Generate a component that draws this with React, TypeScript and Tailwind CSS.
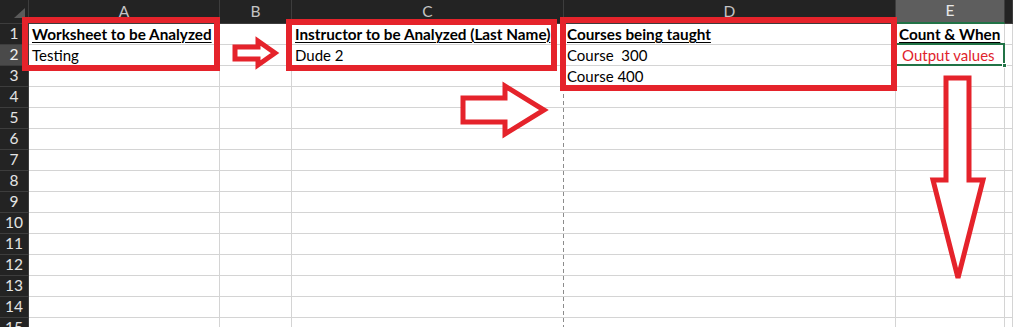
const cols = ['A', 'B', 'C', 'D', 'E', 'F'];

type CellText = { text: string; bold?: boolean; red?: boolean };

const data: Record<string, CellText> = {
  '1A': { text: 'Worksheet to be Analyzed', bold: true },
  '1C': { text: 'Instructor to be Analyzed (Last Name)', bold: true },
  '1D': { text: 'Courses being taught', bold: true },
  '1E': { text: 'Count & When', bold: true },
  '2A': { text: 'Testing' },
  '2C': { text: 'Dude 2' },
  '2D': { text: 'Course  300' },
  '2E': { text: 'Output values', red: true },
  '3D': { text: 'Course 400' },
};

const rows = Array.from({ length: 15 }, (_, i) => i + 1);

function Annotations() {
  const red = '#e5232b';
  return (
    <svg className="pointer-events-none absolute left-0 top-0" width={1013} height={327}>
      <line x1={563.5} y1={24} x2={563.5} y2={327} stroke="#8c8c8c" strokeDasharray="4 3" />
      <rect x={25} y={20} width={192} height={48} fill="none" stroke={red} strokeWidth={6} />
      <rect x={289} y={22} width={265} height={46} fill="none" stroke={red} strokeWidth={6} />
      <rect x={563} y={20} width={331} height={68} fill="none" stroke={red} strokeWidth={6} />
      <polygon
        points="235,47 258,47 258,41 275,53 258,65 258,59 235,59"
        fill="white"
        stroke={red}
        strokeWidth={5}
      />
      <polygon
        points="463,98 505,98 505,86 544,110 505,134 505,122 463,122"
        fill="white"
        stroke={red}
        strokeWidth={5}
      />
      <polygon
        points="946,78 969,78 969,180 983,180 958,278 933,180 946,180"
        fill="white"
        stroke={red}
        strokeWidth={5}
      />
    </svg>
  );
}

export default function App() {
  return (
    <div className="relative h-[327px] w-[1013px] overflow-hidden bg-white font-['Lato',sans-serif]">
      <div className="grid grid-cols-[29px_191px_72px_272px_332px_109px_1fr] grid-rows-[24px_repeat(15,21px)]">
        <div className="relative border-r border-b border-[#3d3d3d] bg-[#232323]">
          <svg className="absolute left-[14px] top-[8px]" width={12} height={11}>
            <polygon points="11,0 11,10 0,10" fill="#5a5a5a" />
          </svg>
        </div>
        {cols.map((c) => (
          <div
            key={c}
            className={`flex items-center justify-center border-r text-[15.5px] ${
              c === 'E'
                ? 'border-b-2 border-[#3d3d3d] border-b-[#217346] bg-[#5e5e5e] text-[#e8e8e8]'
                : 'border-b border-[#3d3d3d] bg-[#232323] text-[#c4c4c4]'
            }`}
          >
            {c === 'F' ? '' : c}
          </div>
        ))}
        {rows.map((r) => (
          <Row key={r} r={r} />
        ))}
      </div>
      <div className="pointer-events-none absolute left-[895px] top-[43px] h-[23px] w-[110px] border-2 border-[#217346]" />
      <div className="pointer-events-none absolute left-[1002px] top-[63px] h-[5px] w-[5px] border border-white bg-[#217346]" />
      <Annotations />
    </div>
  );
}

function Row({ r }: { r: number }) {
  return (
    <>
      <div
        className={`flex items-center justify-center border-r border-b border-[#3d3d3d] text-[15.5px] ${
          r === 2 ? 'bg-[#4a4a4a] text-[#f0f0f0]' : 'bg-[#232323] text-[#e4e4e4]'
        }`}
      >
        {r}
      </div>
      {cols.map((c) => {
        const cell = data[`${r}${c}`];
        return (
          <div
            key={c}
            className={`flex items-end overflow-visible whitespace-pre border-b border-[#d4d4d4] pb-[2px] text-[15px] leading-none ${
              c === 'C' ? '' : 'border-r'
            } ${c === 'E' && cell?.red ? 'pl-[6px]' : 'pl-[3px]'}`}
          >
            {cell && (
              <span
                className={
                  cell.bold
                    ? 'relative z-10 text-[15.3px] font-bold text-black underline decoration-1 underline-offset-2'
                    : cell.red
                      ? 'text-[#e0232c]'
                      : 'text-black'
                }
              >
                {cell.text}
              </span>
            )}
          </div>
        );
      })}
    </>
  );
}
